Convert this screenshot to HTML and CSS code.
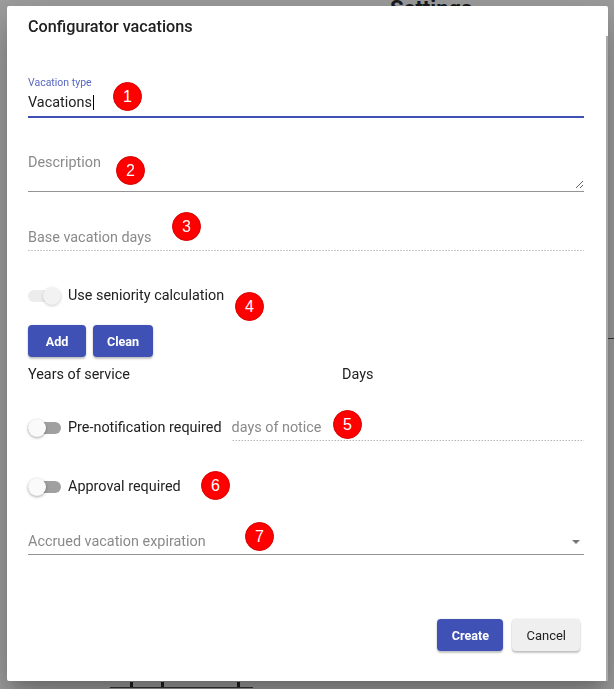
FILE: index.html
```html
<!DOCTYPE html>
<html lang="en">
<head>
  <meta charset="UTF-8">
  <meta name="viewport" content="width=device-width, initial-scale=1.0">
  <title>Configurator vacations</title>
  <link rel="stylesheet" href="styles.css">
</head>
<body>

  <!-- page behind the modal -->
  <div class="page">
    <h1 class="page-title">Settings</h1>
    <div class="page-rule"></div>
    <div class="page-table">
      <span></span><span></span><span></span><span></span>
    </div>
  </div>

  <div class="overlay">
    <div class="dialog">
      <h2 class="dialog-title">Configurator vacations</h2>

      <div class="field field-focused">
        <label class="float-label">Vacation type</label>
        <div class="field-value">Vacations<span class="caret"></span></div>
      </div>

      <div class="field field-desc">
        <textarea placeholder="Description"></textarea>
      </div>

      <div class="field field-disabled field-base">
        <span class="placeholder">Base vacation days</span>
      </div>

      <div class="toggle-row row-seniority">
        <span class="toggle toggle-on"><span class="track"></span><span class="thumb"></span></span>
        <span class="toggle-label">Use seniority calculation</span>
      </div>

      <div class="btn-row">
        <button class="btn btn-primary">Add</button>
        <button class="btn btn-primary">Clean</button>
      </div>

      <div class="table-head">
        <span>Years of service</span>
        <span>Days</span>
      </div>

      <div class="toggle-row row-notice">
        <span class="toggle"><span class="track"></span><span class="thumb"></span></span>
        <span class="toggle-label">Pre-notification required</span>
        <div class="field field-disabled field-inline">
          <span class="placeholder">days of notice</span>
        </div>
      </div>

      <div class="toggle-row row-approval">
        <span class="toggle"><span class="track"></span><span class="thumb"></span></span>
        <span class="toggle-label">Approval required</span>
      </div>

      <div class="field field-select">
        <span class="placeholder">Accrued vacation expiration</span>
        <span class="select-arrow"></span>
      </div>

      <div class="dialog-actions">
        <button class="btn btn-primary">Create</button>
        <button class="btn btn-basic">Cancel</button>
      </div>

      <!-- annotation markers -->
      <span class="badge badge-1">1</span>
      <span class="badge badge-2">2</span>
      <span class="badge badge-3">3</span>
      <span class="badge badge-4">4</span>
      <span class="badge badge-5">5</span>
      <span class="badge badge-6">6</span>
      <span class="badge badge-7">7</span>
    </div>
  </div>

</body>
</html>
```

FILE: styles.css
```css
body {
    margin: 0;
    font-family: Roboto, "Liberation Sans", sans-serif;
    background: #fafafa;
    overflow: hidden;
}

/* page behind the overlay */
.page {
    height: 689px;
}
.page-title {
    margin: 0 0 0 390px;
    font-size: 22px;
    line-height: 18px;
    font-weight: 700;
    color: #2a2a2a;
}
.page-rule {
    margin: 320px 0 0 560px;
    height: 1px;
    background: #555;
}
.page-table {
    display: flex;
    margin: 343px 0 0 110px;
    width: 143px;
    height: 5px;
    border-bottom: 1px solid #555;
}
.page-table span {
    border-right: 3px solid #333;
}
.page-table span:nth-child(1) { width: 20px; }
.page-table span:nth-child(2) { width: 28px; }
.page-table span:nth-child(3) { width: 73px; }
.page-table span:nth-child(4) { width: 13px; border-right: none; }

.overlay {
    position: fixed;
    top: 0;
    left: 0;
    right: 0;
    bottom: 0;
    background: rgba(0, 0, 0, 0.37);
}

.dialog {
    position: absolute;
    left: 7px;
    top: 6px;
    width: 601px;
    height: 675px;
    box-sizing: border-box;
    padding: 9px 24px 0 21px;
    background: #fff;
    border-radius: 2px;
    box-shadow: 0 11px 15px -7px rgba(0,0,0,.2), 0 24px 38px 3px rgba(0,0,0,.14), 0 9px 46px 8px rgba(0,0,0,.12);
    color: rgba(0, 0, 0, 0.87);
}
.dialog::after {
    content: "";
    position: absolute;
    right: 0;
    top: 30px;
    bottom: 0;
    width: 2px;
    background: #a9a9a9;
}

.dialog-title {
    margin: 0;
    font-size: 16.2px;
    line-height: 24px;
    font-weight: 500;
    color: #212121;
}

/* form fields */
.field {
    font-size: 14.4px;
    line-height: 20px;
}
.placeholder {
    color: #8a8a8a;
}
.field-focused {
    margin-top: 38px;
    padding-bottom: 3px;
    border-bottom: 2px solid #3f51b5;
}
.float-label {
    display: block;
    font-size: 10.5px;
    line-height: 12px;
    color: #5868c0;
}
.field-value {
    margin-top: 4px;
    color: #212121;
}
.caret {
    display: inline-block;
    width: 1px;
    height: 15px;
    margin-left: 1px;
    vertical-align: -3px;
    background: #000;
}

.field-desc {
    margin-top: 35px;
    padding-bottom: 2px;
    border-bottom: 1px solid #949494;
}
.field-desc textarea {
    display: block;
    width: 100%;
    height: 36px;
    margin: 0;
    padding: 0;
    border: none;
    outline: none;
    resize: vertical;
    font: 14.4px/20px Roboto, "Liberation Sans", sans-serif;
    color: #212121;
}
.field-desc textarea::placeholder {
    color: #8a8a8a;
}

.field-disabled {
    background-image: linear-gradient(to right, rgba(0,0,0,.42) 0%, rgba(0,0,0,.42) 33%, transparent 0%);
    background-size: 3px 1px;
    background-repeat: repeat-x;
    background-position: bottom;
    padding-bottom: 3px;
}
.field-base {
    margin-top: 36px;
}

/* toggles */
.toggle-row {
    display: flex;
    align-items: flex-start;
    font-size: 14.4px;
    line-height: 20px;
}
.row-seniority { margin-top: 35px; }
.row-notice { margin-top: 33px; }
.row-approval { margin-top: 36px; }

.toggle {
    position: relative;
    flex: none;
    width: 33px;
    height: 20px;
    margin-right: 7px;
}
.toggle .track {
    position: absolute;
    left: 0;
    top: 4px;
    width: 33px;
    height: 12px;
    border-radius: 6px;
    background: #a0a0a0;
}
.toggle .thumb {
    position: absolute;
    left: 0;
    top: 1px;
    width: 18px;
    height: 18px;
    border-radius: 50%;
    background: #fafafa;
    box-shadow: 0 1px 3px rgba(0,0,0,.35);
}
.toggle-on .track {
    background: #ececec;
}
.toggle-on .thumb {
    left: 15px;
    background: #f2f2f2;
    box-shadow: 0 1px 3px rgba(0,0,0,.2);
}
.toggle-label {
    color: #212121;
    white-space: nowrap;
}
.field-inline {
    flex: 1;
    margin-left: 10px;
}

/* buttons */
.btn-row {
    display: flex;
    gap: 7px;
    margin-top: 19px;
}
.btn {
    height: 32px;
    min-width: 58px;
    padding: 0 14px;
    border: none;
    border-radius: 4px;
    font-family: Roboto, "Liberation Sans", sans-serif;
    cursor: pointer;
    box-shadow: 0 2px 2px rgba(0,0,0,.22), 0 0 2px rgba(0,0,0,.14);
}
.btn-primary {
    background: #3f51b5;
    color: #fff;
    font-size: 12.6px;
    font-weight: 700;
}
.btn-basic {
    background: #efefef;
    color: #212121;
    font-size: 13px;
    font-weight: 400;
}

.table-head {
    display: grid;
    grid-template-columns: 314px 1fr;
    margin-top: 8px;
    font-size: 14.4px;
    line-height: 20px;
    color: #212121;
}

.field-select {
    display: flex;
    align-items: center;
    justify-content: space-between;
    margin-top: 35px;
    padding-bottom: 2px;
    border-bottom: 1px solid #949494;
}
.select-arrow {
    width: 0;
    height: 0;
    margin-right: 4px;
    border-left: 4px solid transparent;
    border-right: 4px solid transparent;
    border-top: 4px solid #757575;
}

.dialog-actions {
    display: flex;
    justify-content: flex-end;
    gap: 9px;
    margin-top: 64px;
    margin-right: 4px;
}
.dialog-actions .btn {
    min-width: 66px;
}

/* red numbered markers */
.badge {
    position: absolute;
    width: 29px;
    height: 29px;
    box-sizing: border-box;
    border: 1px solid #d40000;
    border-radius: 50%;
    background: #ff0000;
    color: #fff;
    font-family: "Liberation Sans", Arial, sans-serif;
    font-size: 16px;
    line-height: 27px;
    text-align: center;
}
.badge-1 { left: 106px; top: 76px; }
.badge-2 { left: 109px; top: 150px; }
.badge-3 { left: 165px; top: 206px; }
.badge-4 { left: 228px; top: 286px; }
.badge-5 { left: 326px; top: 404px; }
.badge-6 { left: 194px; top: 465px; }
.badge-7 { left: 238px; top: 516px; }
```
